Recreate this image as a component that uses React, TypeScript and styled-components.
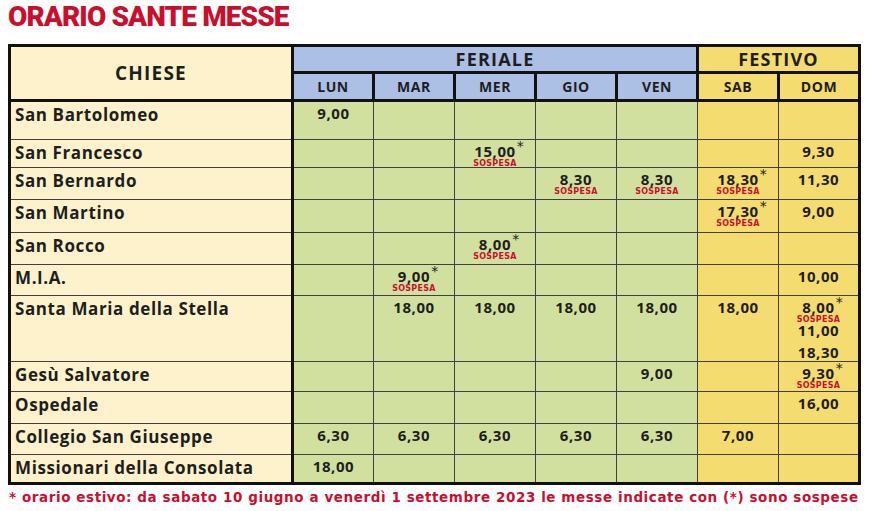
import React, { FC } from "react"
import styled, { createGlobalStyle } from "styled-components"

type Tone = "cream" | "blue" | "green" | "yellow"

const tones: Record<Tone, string> = {
  cream: "#fdf2cb",
  blue: "#abc0e4",
  green: "#d1e09e",
  yellow: "#f4dc70",
}

type Slot = { t: string; star?: boolean; off?: boolean }
type Church = { name: string; h: number; cells: Record<string, Slot[]> }

const feriali = ["LUN", "MAR", "MER", "GIO", "VEN"]
const festivi = ["SAB", "DOM"]
const days = [...feriali, ...festivi]

const s = (t: string): Slot[] => [{ t }]
const sosp = (t: string, star = true): Slot[] => [{ t, star, off: true }]

const churches: Church[] = [
  { name: "San Bartolomeo", h: 39, cells: { LUN: s("9,00") } },
  { name: "San Francesco", h: 28, cells: { MER: sosp("15,00"), DOM: s("9,30") } },
  {
    name: "San Bernardo",
    h: 32,
    cells: { GIO: sosp("8,30", false), VEN: sosp("8,30", false), SAB: sosp("18,30"), DOM: s("11,30") },
  },
  { name: "San Martino", h: 33, cells: { SAB: sosp("17,30"), DOM: s("9,00") } },
  { name: "San Rocco", h: 32, cells: { MER: sosp("8,00") } },
  { name: "M.I.A.", h: 31, cells: { MAR: sosp("9,00"), DOM: s("10,00") } },
  {
    name: "Santa Maria della Stella",
    h: 66,
    cells: {
      MAR: s("18,00"),
      MER: s("18,00"),
      GIO: s("18,00"),
      VEN: s("18,00"),
      SAB: s("18,00"),
      DOM: [{ t: "8,00", star: true, off: true }, { t: "11,00" }, { t: "18,30" }],
    },
  },
  { name: "Gesù Salvatore", h: 30, cells: { VEN: s("9,00"), DOM: sosp("9,30") } },
  { name: "Ospedale", h: 32, cells: { DOM: s("16,00") } },
  {
    name: "Collegio San Giuseppe",
    h: 31,
    cells: { LUN: s("6,30"), MAR: s("6,30"), MER: s("6,30"), GIO: s("6,30"), VEN: s("6,30"), SAB: s("7,00") },
  },
  { name: "Missionari della Consolata", h: 29, cells: { LUN: s("18,00") } },
]

const GlobalStyle = createGlobalStyle`
  html, body {
    margin: 0;
    padding: 0;
    background: #ffffff;
  }
`

const Page = styled.div`
  width: 870px;
  height: 511px;
  box-sizing: border-box;
  padding: 1px 0 0 8px;
  overflow: hidden;
`

const Title = styled.h1`
  margin: 0;
  font-family: Roboto, "Liberation Sans", sans-serif;
  font-weight: 900;
  font-size: 28px;
  line-height: 32px;
  letter-spacing: -0.9px;
  color: #c8102e;
`

const Schedule = styled.table`
  margin-top: 11px;
  width: 851px;
  table-layout: fixed;
  border-collapse: collapse;
  border: 3px solid #111;
  font-family: "Open Sans", "Liberation Sans", sans-serif;
  color: #1e1e1e;
`

const HeadCell = styled.th<{ $tone: Tone; $size: number }>`
  background: ${p => tones[p.$tone]};
  border: 3px solid #111;
  padding: 0;
  font-weight: 700;
  font-size: ${p => p.$size}px;
  letter-spacing: ${p => (p.$size > 16 ? 1.2 : 0.6)}px;
  text-align: center;
  vertical-align: middle;
`

const HeadRow = styled.tr<{ $h: number }>`
  height: ${p => p.$h}px;
`

const Row = styled.tr<{ $h: number }>`
  height: ${p => p.$h}px;
`

const NameCell = styled.td`
  background: ${tones.cream};
  border: 1.5px solid #404040;
  border-right: 3px solid #111;
  padding: 4px 0 0 4px;
  vertical-align: top;
  font-weight: 700;
  font-size: 17px;
  line-height: 18px;
  letter-spacing: 0.6px;
  white-space: nowrap;
`

const DayCell = styled.td<{ $tone: Tone }>`
  background: ${p => tones[p.$tone]};
  border: 1.5px solid #404040;
  padding: 4px 0 0;
  vertical-align: top;
  text-align: center;
`

const Entry = styled.div<{ $gap: number }>`
  margin-top: ${p => p.$gap}px;
  display: flex;
  flex-direction: column;
  align-items: center;
`

const Time = styled.span`
  position: relative;
  font-weight: 700;
  font-size: 15px;
  line-height: 15px;
  letter-spacing: 0.6px;
`

const Star = styled.span`
  position: absolute;
  left: 100%;
  top: -5px;
  margin-left: 1px;
  font-family: "DejaVu Sans", sans-serif;
  font-weight: 400;
  font-size: 14px;
  line-height: 14px;
`

const Suspended = styled.span`
  margin-top: 1px;
  font-family: "DejaVu Sans", "Liberation Sans", sans-serif;
  font-weight: 700;
  font-size: 8px;
  line-height: 7px;
  letter-spacing: 0.3px;
  color: #c8102e;
`

const Footnote = styled.p`
  margin: 4px 0 0 1px;
  font-family: "DejaVu Sans", "Liberation Sans", sans-serif;
  font-weight: 700;
  font-size: 13.5px;
  line-height: 16px;
  letter-spacing: 0.58px;
  color: #c8102e;
  white-space: nowrap;
`

const Slots: FC<{ items?: Slot[] }> = ({ items }) => (
  <>
    {items?.map((it, i) => (
      <Entry key={i} $gap={i === 0 ? 0 : items[i - 1].off ? 0 : 7}>
        <Time>
          {it.t}
          {it.star && <Star>*</Star>}
        </Time>
        {it.off && <Suspended>SOSPESA</Suspended>}
      </Entry>
    ))}
  </>
)

const App: FC = () => {
  return (
    <>
      <GlobalStyle />
      <Page>
        <Title>ORARIO SANTE MESSE</Title>
        <Schedule>
          <colgroup>
            <col style={{ width: 283 }} />
            {days.map(d => (
              <col key={d} style={{ width: 81 }} />
            ))}
          </colgroup>
          <thead>
            <HeadRow $h={27}>
              <HeadCell $tone="cream" $size={19} rowSpan={2}>
                CHIESE
              </HeadCell>
              <HeadCell $tone="blue" $size={18} colSpan={5}>
                FERIALE
              </HeadCell>
              <HeadCell $tone="yellow" $size={18} colSpan={2}>
                FESTIVO
              </HeadCell>
            </HeadRow>
            <HeadRow $h={28}>
              {days.map(d => (
                <HeadCell key={d} $tone={festivi.includes(d) ? "yellow" : "blue"} $size={14}>
                  {d}
                </HeadCell>
              ))}
            </HeadRow>
          </thead>
          <tbody>
            {churches.map(c => (
              <Row key={c.name} $h={c.h}>
                <NameCell>{c.name}</NameCell>
                {days.map(d => (
                  <DayCell key={d} $tone={festivi.includes(d) ? "yellow" : "green"}>
                    <Slots items={c.cells[d]} />
                  </DayCell>
                ))}
              </Row>
            ))}
          </tbody>
        </Schedule>
        <Footnote>
          * orario estivo: da sabato 10 giugno a venerdì 1 settembre 2023 le messe indicate con (*) sono sospese
        </Footnote>
      </Page>
    </>
  )
}

export default App
